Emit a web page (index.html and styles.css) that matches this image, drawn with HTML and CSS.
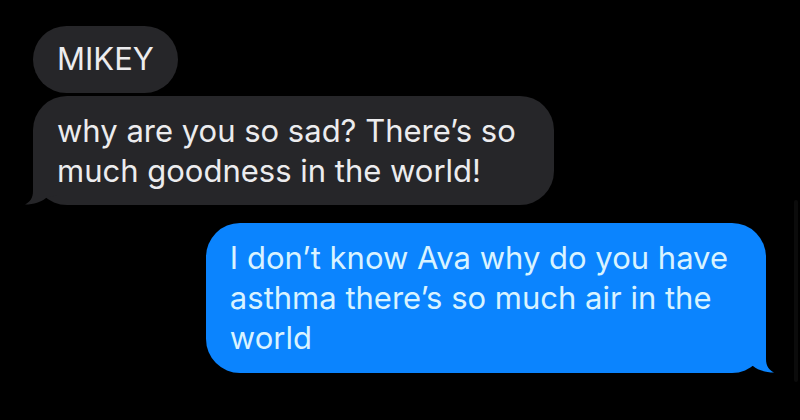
FILE: index.html
```html
<!DOCTYPE html>
<html lang="en">
<head>
<meta charset="utf-8">
<meta name="viewport" content="width=device-width, initial-scale=1">
<title>Messages</title>
<link rel="stylesheet" href="styles.css">
</head>
<body>
<main class="thread">
  <p class="bubble received short">MIKEY</p>
  <p class="bubble received">why are you so sad? There’s so<br>much goodness in the world!
    <svg class="tail" viewBox="0 0 40 36" aria-hidden="true"><path d="M8 0V22C8 29 5 33 0 35.500C9 35.500 16 33 21 29L32 26V0Z"/></svg>
  </p>
  <p class="bubble sent">I don’t know Ava why do you have<br>asthma there’s so much air in the<br>world
    <svg class="tail" viewBox="0 0 40 36" aria-hidden="true"><path d="M8 0V22C8 29 5 33 0 35.500C9 35.500 16 33 21 29L32 26V0Z"/></svg>
  </p>
</main>
<div class="scroll-thumb"></div>
</body>
</html>
```
FILE: styles.css
```css
body {
  margin: 0;
  background: #000;
  font-family: Inter, "Liberation Sans", sans-serif;
  font-size: 31px;
  line-height: 40px;
}

.thread {
  display: flex;
  flex-direction: column;
  align-items: flex-start;
  gap: 3px;
  padding: 26px 34px 40px 33px;
}

.bubble {
  position: relative;
  box-sizing: border-box;
  max-width: 90%;
  margin: 0;
  padding: 15px 38px 14px 24px;
  border-radius: 34px;
}

.received {
  background: #262629;
  color: #ececee;
}

.short {
  padding: 13px 24px 14px;
}

.sent {
  align-self: flex-end;
  margin-top: 15px;
  padding-bottom: 15px;
  background: #0b84fe;
  color: #d9f3ff;
}

.tail {
  position: absolute;
  bottom: 0;
  left: -8px;
  width: 40px;
  height: 36px;
  fill: #262629;
}

.sent .tail {
  right: -8px;
  left: auto;
  fill: #0b84fe;
  transform: scaleX(-1);
}

.scroll-thumb {
  position: absolute;
  top: 200px;
  right: 2px;
  width: 4px;
  height: 182px;
  border-radius: 2px;
  background: #0b0b0b;
}
```
